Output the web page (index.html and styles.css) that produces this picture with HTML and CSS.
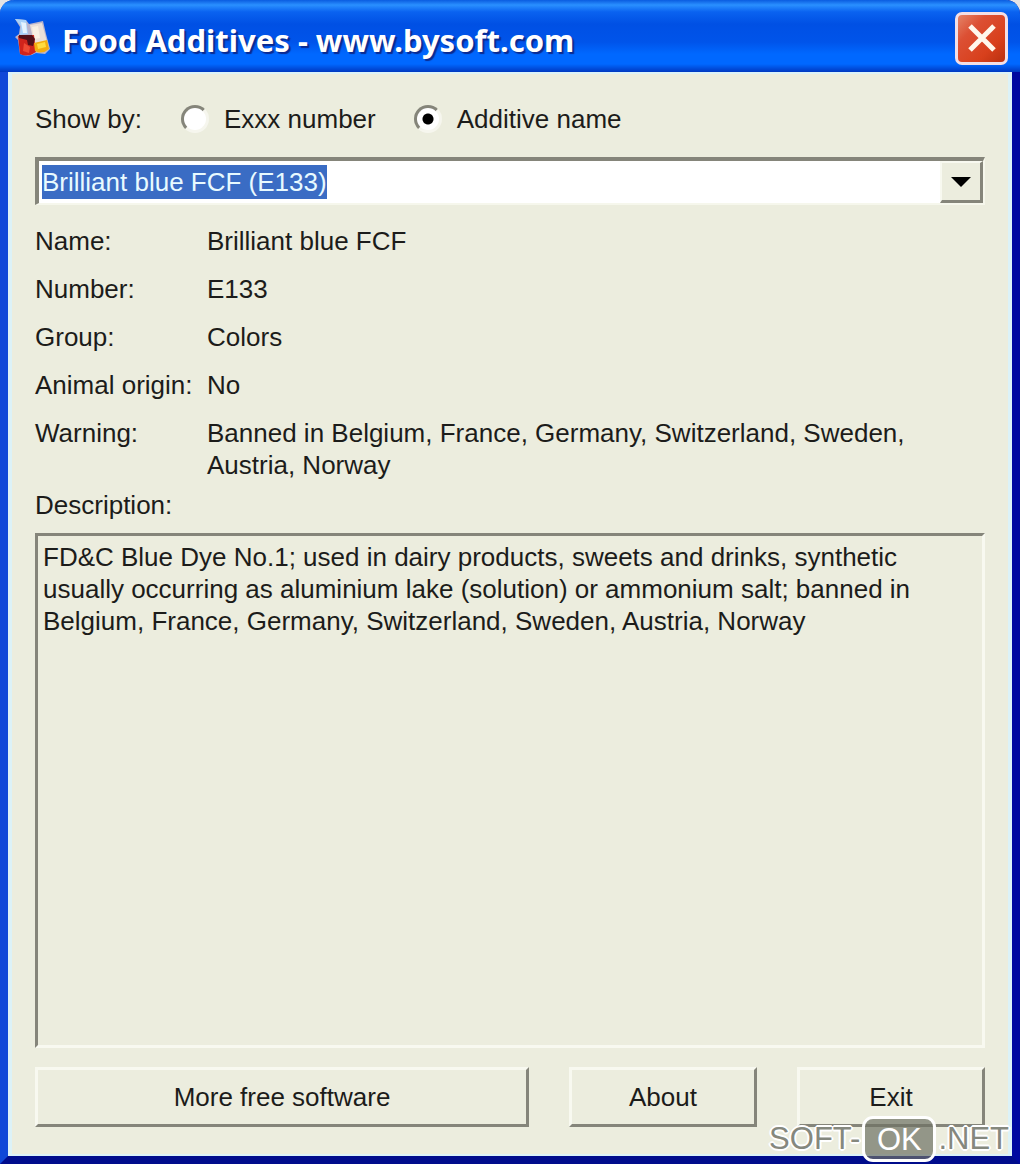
FILE: index.html
```html
<!DOCTYPE html>
<html lang="en">
<head>
  <meta charset="UTF-8" />
  <meta name="viewport" content="width=device-width, initial-scale=1.0"/>
  <title>Food Additives - www.bysoft.com</title>
  <link rel="stylesheet" href="styles.css">
</head>
<body>
  <div class="window">
    <header class="titlebar">
      <svg class="app-icon" viewBox="0 0 38 40" aria-hidden="true">
        <path d="M1 1 L12 2 L15 6 L29 3 L32 16 L36 31 L31 36 L22 35 Q14 40 6 36 L4 22 L1 19 L5 16 L6 9 Z" fill="#b9b4cc"/>
        <path d="M1 1 L12 2 L14 16 L6 17 L7 8 Z" fill="#a9d2fa"/>
        <path d="M7 4 L12 5 L13 15 L9 15 Z" fill="#e6f3fe"/>
        <path d="M16 7 L28 5 L33 24 L20 25 Z" fill="#eadfd8"/>
        <path d="M18 9 L24 8 L26 20 L20 21 Z" fill="#f8f0e4"/>
        <path d="M4 18 L20 17 L22 34 Q14 40 6 36 Z" fill="#d0241c"/>
        <path d="M5 17 L18 17 L21 21 L19 28 L14 27 L13 22 L5 20 Z" fill="#52101a"/>
        <path d="M10 25 L16 29 L15 35 L9 33 Z" fill="#ee4a34"/>
        <path d="M20 25 L33 22 L35 31 Q28 37 21 33 Z" fill="#f4ae10"/>
        <path d="M23 26 L31 24 L32 29 L24 31 Z" fill="#ffdc40"/>
      </svg>
      <h1>Food Additives - www.bysoft.com</h1>
      <button type="button" class="close" aria-label="Close">
        <svg viewBox="0 0 28 28" aria-hidden="true">
          <path d="M2 2 L26 26 M26 2 L2 26" stroke="#fff8ec" stroke-width="5"/>
        </svg>
      </button>
    </header>

    <main>
      <!-- Sort options -->
      <div class="show-by" role="radiogroup" aria-labelledby="show-label">
        <span id="show-label" class="show-label">Show by:</span>
        <label class="option"><input type="radio" name="show" value="number" />Exxx number</label>
        <label class="option"><input type="radio" name="show" value="name" checked />Additive name</label>
      </div>

      <!-- Additive picker -->
      <div class="combo">
        <select id="additive" aria-label="Additive">
          <option>Brilliant blue FCF (E133)</option>
        </select>
        <button type="button" id="drop" class="drop" aria-label="Open list">
          <svg viewBox="0 0 20 10" aria-hidden="true"><path d="M0 0 H20 L10 10 Z"/></svg>
        </button>
      </div>

      <!-- Details -->
      <dl class="details">
        <dt>Name:</dt>
        <dd>Brilliant blue FCF</dd>
        <dt>Number:</dt>
        <dd>E133</dd>
        <dt>Group:</dt>
        <dd>Colors</dd>
        <dt>Animal origin:</dt>
        <dd>No</dd>
        <dt>Warning:</dt>
        <dd>Banned in Belgium, France, Germany, Switzerland, Sweden, Austria, Norway</dd>
      </dl>

      <label for="description">Description:</label>
      <textarea id="description" class="description" readonly>FD&amp;C Blue Dye No.1; used in dairy products, sweets and drinks, synthetic usually occurring as aluminium lake (solution) or ammonium salt; banned in Belgium, France, Germany, Switzerland, Sweden, Austria, Norway</textarea>

      <div class="actions">
        <button type="button" class="btn">More free software</button>
        <button type="button" class="btn">About</button>
        <button type="button" class="btn">Exit</button>
      </div>
    </main>
  </div>

  <div class="watermark">SOFT-<span class="badge">OK</span>.NET</div>

  <script>
    const additive = document.getElementById('additive');

    document.getElementById('drop').addEventListener('click', function() {
      additive.showPicker();
    });
  </script>
</body>
</html>
```

FILE: styles.css
```css
* {
  box-sizing: border-box;
}
body {
  margin: 0;
  background: #e4e4e4;
  color: #1c1c1a;
  font-family: "Liberation Sans", Arial, sans-serif;
  font-size: 26px;
  line-height: 32px;
}
button, select, textarea {
  font: inherit;
  color: inherit;
}
.window {
  min-height: 100vh;
  display: flex;
  flex-direction: column;
  border: solid;
  border-width: 0 8px 8px;
  border-color: #0b3fd0 #0008a0 #000c8c #0f48d8;
  border-radius: 14px 14px 0 0;
  background: #ecedde;
}
.titlebar {
  display: flex;
  align-items: center;
  height: 72px;
  margin: 0 -8px;
  padding: 4px 12px 0 14px;
  border-radius: 14px 14px 0 0;
  background: linear-gradient(#0a5ce0 0, #2a90ff 5px, #0a62f0 12px, #0050e4 24px, #0054ea 42px, #0068ff 54px, #0068ff 64px, #0038c0 72px);
}
.app-icon {
  width: 38px;
  height: 40px;
}
h1 {
  flex: 1;
  margin: 0;
  padding: 4px 0 0 10px;
  color: #fff;
  font-family: "Noto Sans", "Open Sans", sans-serif;
  font-size: 31px;
  line-height: 40px;
  text-shadow: 2px 2px 1px #0a2a90;
}
.close {
  display: flex;
  align-items: center;
  justify-content: center;
  width: 53px;
  height: 53px;
  padding: 0;
  border: 3px solid #f3dfe6;
  border-radius: 7px;
  background: linear-gradient(135deg, #e48468 0, #dc5034 30%, #d8401c 70%, #b83010 100%);
}
.close svg {
  width: 28px;
  height: 28px;
}
main {
  flex: 1;
  display: flex;
  flex-direction: column;
  padding: 29px 23px 27px;
  border: solid #dcf2f8;
  border-width: 2px 4px;
}
.show-by {
  display: flex;
  align-items: center;
}
.show-label {
  width: 146px;
}
.option {
  display: flex;
  align-items: center;
  gap: 15px;
  margin-right: 38px;
}
.option input {
  appearance: none;
  width: 28px;
  height: 28px;
  margin: 0;
  border: 3px solid;
  border-color: #85857a #f6f6ee #f6f6ee #85857a;
  border-radius: 50%;
  background: #fff;
}
.option input:checked {
  background: radial-gradient(circle, #000 5px, #fff 6px);
}
.combo {
  display: flex;
  align-items: center;
  height: 48px;
  margin-top: 22px;
  padding-left: 3px;
  border: solid;
  border-width: 4px 2px 2px 4px;
  border-color: #85857a #f6f7ec #f6f7ec #85857a;
  background: #fff;
}
.combo select {
  appearance: none;
  field-sizing: content;
  height: 34px;
  padding: 0;
  border: 0;
  border-radius: 0;
  outline: 0;
  background: #3a6cc4;
  color: #e8faff;
}
.drop {
  display: flex;
  align-items: center;
  justify-content: center;
  width: 43px;
  height: 42px;
  margin-left: auto;
  padding: 0;
  border: solid;
  border-width: 2px 3px 3px 2px;
  border-color: #f8f9f0 #85857a #85857a #f8f9f0;
  background: #ecedde;
}
.drop svg {
  width: 20px;
  height: 10px;
}
.details {
  display: grid;
  grid-template-columns: 172px 1fr;
  row-gap: 16px;
  margin: 20px 0 8px;
}
.details dt {
  white-space: nowrap;
}
.details dd {
  margin: 0;
  padding-right: 60px;
}
.description {
  flex: 1;
  display: block;
  width: 100%;
  margin-top: 12px;
  padding: 5px;
  border: 3px solid;
  border-color: #85857a #f8f9f0 #f8f9f0 #85857a;
  border-radius: 0;
  outline: 0;
  background: transparent;
  resize: none;
  overflow: hidden;
}
.actions {
  display: grid;
  grid-template-columns: 1fr 188px 188px;
  gap: 40px;
  margin-top: 19px;
}
.btn {
  height: 60px;
  padding: 0;
  border: 3px solid;
  border-color: #f8f9f0 #85857a #85857a #f8f9f0;
  background: #ecedde;
}
.watermark {
  position: absolute;
  right: 11px;
  bottom: 2px;
  display: flex;
  align-items: center;
  color: #85887e;
  font-size: 31px;
  text-shadow: 2px 0 #fff, -2px 0 #fff, 0 2px #fff, 0 -2px #fff, 1px 1px #fff, -1px -1px #fff, 1px -1px #fff, -1px 1px #fff;
}
.badge {
  width: 74px;
  height: 46px;
  margin: 0 2px;
  border: 3px solid #fff;
  border-radius: 11px;
  background: rgba(110, 112, 100, 0.7);
  color: #fff;
  line-height: 42px;
  text-align: center;
  text-shadow: none;
}
@media (max-width: 600px) {
  .actions { grid-template-columns: 1fr; gap: 12px; }
}
```
